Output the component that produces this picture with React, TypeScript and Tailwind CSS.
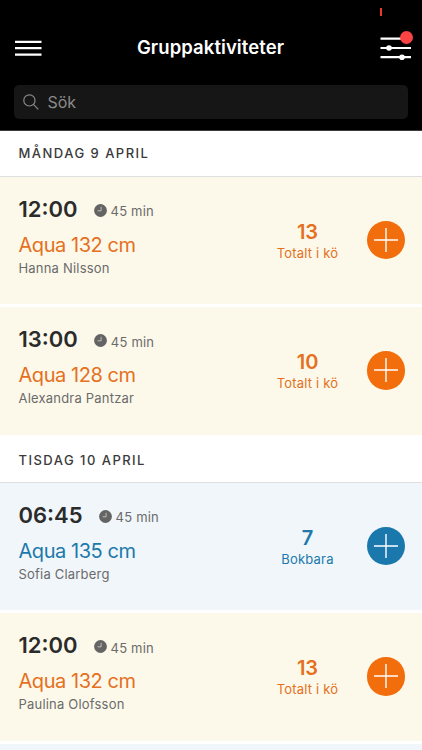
import React from 'react';

interface Activity {
  id: number;
  time: string;
  duration: string;
  name: string;
  instructor: string;
  count: number;
  status: 'queue' | 'bookable';
}

interface Day {
  label: string;
  headingClass: string;
  activities: Activity[];
}

const days: Day[] = [
  {
    label: 'Måndag 9 april',
    headingClass: 'h-[45.5px] pt-px',
    activities: [
      { id: 1, time: '12:00', duration: '45 min', name: 'Aqua 132 cm', instructor: 'Hanna Nilsson', count: 13, status: 'queue' },
      { id: 2, time: '13:00', duration: '45 min', name: 'Aqua 128 cm', instructor: 'Alexandra Pantzar', count: 10, status: 'queue' },
    ],
  },
  {
    label: 'Tisdag 10 april',
    headingClass: 'h-12 pt-[5px]',
    activities: [
      { id: 3, time: '06:45', duration: '45 min', name: 'Aqua 135 cm', instructor: 'Sofia Clarberg', count: 7, status: 'bookable' },
      { id: 4, time: '12:00', duration: '45 min', name: 'Aqua 132 cm', instructor: 'Paulina Olofsson', count: 13, status: 'queue' },
    ],
  },
];

const MenuIcon = () => (
  <svg width="27" height="18" viewBox="0 0 27 18" stroke="#fff" strokeWidth="2.2">
    <path d="M0 2.8h26.5M0 9.2h26.5M0 15.7h26.5" />
  </svg>
);

const FilterIcon = () => (
  <svg width="31" height="24" viewBox="0 0 31 24" stroke="#fff" strokeWidth="2.2">
    <path d="M.5 2.7h30.5M.5 12h30.5M.5 21.2h30.5" />
    <circle cx="9" cy="12" r="2.8" fill="#fff" stroke="none" />
    <circle cx="22" cy="21.2" r="2.8" fill="#fff" stroke="none" />
  </svg>
);

const SearchIcon = () => (
  <svg width="16" height="16" viewBox="0 0 16 16" fill="none" stroke="#8a8a8a" strokeWidth="1.2">
    <circle cx="6.4" cy="6.4" r="5.6" />
    <path d="M10.4 10.4l4.9 4.9" />
  </svg>
);

const ClockIcon = () => (
  <svg width="13" height="13" viewBox="0 0 13 13">
    <circle cx="6.5" cy="6.5" r="6.4" fill="#646464" />
    <path d="M7.1 2.8v4H3.6" fill="none" stroke="#c9c8c0" strokeWidth="0.9" />
  </svg>
);

const PlusIcon = () => (
  <svg width="24" height="24" viewBox="0 0 24 24" stroke="#fff" strokeWidth="1.4">
    <path d="M12 0v24M0 12h24" />
  </svg>
);

const Header = () => (
  <header className="h-[131px] bg-black border-b border-[#3c3c3c] px-3.5">
    <div className="h-[85px] pt-[31px] flex items-start justify-between">
      <button className="ml-[1px] mt-[7.5px]" aria-label="Meny">
        <MenuIcon />
      </button>
      <h1 className="-ml-px text-[18.5px] leading-8 font-semibold tracking-[0.08px] text-white">Gruppaktiviteter</h1>
      <button className="relative mt-[5px] -mr-[3px]" aria-label="Filter">
        <FilterIcon />
        <span className="absolute -top-[5px] left-[20.5px] size-[13px] rounded-full bg-[#fa4343]" />
        <span className="absolute -top-[28px] left-0 w-[2px] h-2 bg-[#e8392f]" />
      </button>
    </div>
    <div className="h-[34px] rounded-[5px] bg-[#161616] flex items-center pl-[9px]">
      <SearchIcon />
      <span className="ml-[8.5px] text-base text-[#8a8a8a]">Sök</span>
    </div>
  </header>
);

const ActivityRow: React.FC<{ activity: Activity }> = ({ activity }) => {
  const bookable = activity.status === 'bookable';
  const textClass = bookable ? 'text-[#2079aa]' : 'text-[#e5701e]';

  return (
    <li className={`h-[127.5px] shrink-0 flex ${bookable ? 'bg-[#f0f6fa]' : 'bg-[#fcf9ea]'}`}>
      <div className="flex-1 pl-[18.5px] pt-[18px]">
        <div className="flex h-7 items-center">
          <span className="text-[22px] leading-7 font-semibold text-[#2b2b2b]">{activity.time}</span>
          <span className="ml-4 mt-[3px]">
            <ClockIcon />
          </span>
          <span className="ml-1 mt-[7px] text-[13px] tracking-[0.2px] text-[#6b6b6b]">{activity.duration}</span>
        </div>
        <p className={`mt-[10px] text-xl leading-6 tracking-[-0.45px] ${textClass}`}>{activity.name}</p>
        <p className="mt-[2px] text-[13px] leading-[18px] tracking-[0.2px] text-[#6b6b6b]">{activity.instructor}</p>
      </div>
      <div className={`w-[90px] pt-[43px] text-center ${textClass}`}>
        <p className="text-xl leading-6 font-semibold">{activity.count}</p>
        <p className="text-[13px] leading-[18px] tracking-[0.2px]">{bookable ? 'Bokbara' : 'Totalt i kö'}</p>
      </div>
      <button
        className={`mt-11 ml-3.5 mr-[17px] size-[38.5px] rounded-full flex items-center justify-center ${bookable ? 'bg-[#1b78ad]' : 'bg-[#f26d0b]'}`}
        aria-label="Boka"
      >
        <PlusIcon />
      </button>
    </li>
  );
};

export default function App() {
  return (
    <div className="flex h-[750px] w-[422px] flex-col overflow-hidden bg-white font-['Inter','Liberation_Sans',sans-serif]">
      <Header />
      {days.map(day => (
        <section key={day.label}>
          <h2 className={`${day.headingClass} flex items-center border-b border-[#dedfe0] pl-[18.5px] text-[13px] font-medium uppercase tracking-[1.47px] text-[#3a3a3a]`}>
            {day.label}
          </h2>
          <ul className="flex flex-col gap-[3px]">
            {day.activities.map(activity => (
              <ActivityRow key={activity.id} activity={activity} />
            ))}
          </ul>
        </section>
      ))}
      {/* top edge of the next bookable row */}
      <div className="mt-[3px] flex-1 bg-[#f0f6fa]" />
    </div>
  );
}
